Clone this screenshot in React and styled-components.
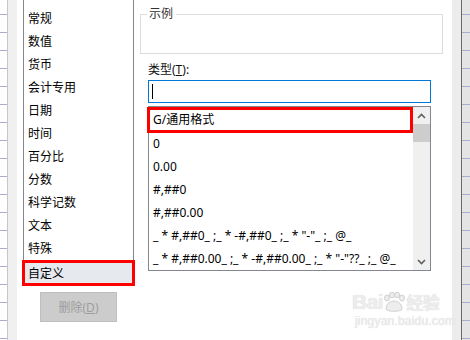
import React from "react";
import styled, { createGlobalStyle } from "styled-components";

const Global = createGlobalStyle`
  html, body { margin: 0; padding: 0; background: #fff; }
  body { width: 470px; height: 340px; overflow: hidden; }
  #root { width: 470px; height: 340px; }
`;

const Page = styled.div`
  position: relative;
  display: flex;
  width: 470px;
  height: 340px;
  overflow: hidden;
  font-family: "Noto Sans", "Noto Sans CJK SC", sans-serif;
  font-size: 12px;
  color: #000;
`;

const Sheet = styled.div`
  width: ${(p) => p.$w}px;
  flex: none;
  background-color: ${(p) => p.$bg};
  background-image: repeating-linear-gradient(
    to bottom,
    transparent 0px,
    transparent 14px,
    #a9aed0 14px,
    #a9aed0 15px,
    transparent 15px,
    transparent 18px
  );
`;

const Edge = styled.div`
  width: ${(p) => p.$w}px;
  flex: none;
  background: ${(p) => p.$bg};
  border-left: ${(p) => (p.$line ? `1px solid ${p.$line}` : "none")};
  border-right: ${(p) => (p.$rline ? `1px solid ${p.$rline}` : "none")};
  box-sizing: border-box;
`;

const Dialog = styled.div`
  flex: 1;
  background: #fff;
  display: flex;
  gap: 6px;
  padding-left: 6px;
  align-items: flex-start;
`;

const LeftCol = styled.div`
  width: 111px;
  display: flex;
  flex-direction: column;
  align-items: center;
`;

const CatList = styled.div`
  width: 111px;
  box-sizing: border-box;
  margin-top: -10px;
  padding-top: 16px;
  border: 1px solid #828790;
  display: flex;
  flex-direction: column;
`;

const CatItem = styled.div`
  height: 23px;
  line-height: 23px;
  padding-left: 4px;
  white-space: nowrap;
  ${(p) =>
    p.$selected &&
    `
    margin: 0 -2px -1px;
    height: 26px;
    line-height: 22px;
    padding-left: 3px;
    border: 3px solid #f00;
    box-sizing: border-box;
    background: #e6e9ee;
  `}
`;

const DelButton = styled.div`
  margin-top: 6px;
  width: 77px;
  height: 30px;
  box-sizing: border-box;
  background: #cccccc;
  border: 1px solid #bfbfbf;
  color: #9d9d9d;
  display: flex;
  align-items: center;
  justify-content: center;
  font-size: 12px;
`;

const U = styled.span`
  text-decoration: underline;
`;

const RightCol = styled.div`
  width: 303px;
  display: flex;
  flex-direction: column;
  padding-top: 14px;
`;

const Group = styled.fieldset`
  margin: 0;
  height: 47px;
  box-sizing: border-box;
  border: 1px solid #dcdcdc;
  padding: 0;
  margin-top: -7px;
  legend {
    margin-left: 6px;
    padding: 0 3px 0 2px;
    color: #333;
    line-height: 14px;
    font-size: 12px;
  }
`;

const Label = styled.div`
  margin-left: 8px;
  margin-top: 9px;
  line-height: 14px;
  color: #111;
`;

const Input = styled.div`
  margin-left: 8px;
  margin-top: 3px;
  width: 283px;
  height: 23px;
  box-sizing: border-box;
  border: 1px solid #0078d7;
  display: flex;
  align-items: center;
  padding-left: 3px;
`;

const Caret = styled.div`
  width: 1px;
  height: 15px;
  background: #000;
`;

const TypeBox = styled.div`
  margin-left: 8px;
  margin-top: 3px;
  width: 283px;
  height: 165px;
  box-sizing: border-box;
  border: 1px solid #828790;
  display: flex;
`;

const TypeItems = styled.div`
  flex: 1;
  min-width: 0;
  display: flex;
  flex-direction: column;
  padding-top: 1px;
`;

const TypeItem = styled.div`
  height: 23px;
  line-height: 23px;
  padding-left: 4px;
  white-space: nowrap;
  overflow: hidden;
  ${(p) =>
    p.$selected &&
    `
    margin: 0 0 -1px -2px;
    height: 26px;
    line-height: 20px;
    padding-left: 3px;
    border: 3px solid #f00;
    box-sizing: border-box;
    margin-top: -1px;
  `}
`;

const ScrollBar = styled.div`
  width: 17px;
  flex: none;
  background: #f0f0f0;
  display: flex;
  flex-direction: column;
  align-items: stretch;
`;

const Arrow = styled.div`
  height: 17px;
  display: flex;
  align-items: center;
  justify-content: center;
`;

const Thumb = styled.div`
  height: 18px;
  background: #cdcdcd;
`;

const Track = styled.div`
  flex: 1;
`;

const Watermark = styled.div`
  position: absolute;
  left: 352px;
  top: 291px;
  color: #ededed;
  font-family: "Liberation Sans", Arial, sans-serif;
  text-shadow: 0 0 1px #d0d0d0;
  pointer-events: none;
`;

const WMTop = styled.div`
  display: flex;
  align-items: center;
  font-size: 21px;
  font-weight: bold;
  line-height: 22px;
  letter-spacing: -0.5px;
`;

const WMCjk = styled.span`
  font-family: "Noto Sans CJK SC", sans-serif;
  font-size: 17px;
  margin-left: 1px;
`;

const WMBottom = styled.div`
  font-size: 12px;
  line-height: 14px;
  margin-top: 1px;
  margin-left: 3px;
  letter-spacing: 0.2px;
`;

const cats = [
  "常规",
  "数值",
  "货币",
  "会计专用",
  "日期",
  "时间",
  "百分比",
  "分数",
  "科学记数",
  "文本",
  "特殊",
  "自定义",
];

const types = [
  "G/通用格式",
  "0",
  "0.00",
  "#,##0",
  "#,##0.00",
  '_ * #,##0_ ;_ * -#,##0_ ;_ * "-"_ ;_ @_',
  '_ * #,##0.00_ ;_ * -#,##0.00_ ;_ * "-"??_ ;_ @_',
];

export default function App() {
  return (
    <>
      <Global />
      <Page>
        <Sheet $w={7} $bg="#ffffff" />
        <Edge $w={10} $bg="#f0f0f0" $line="#c8c8c8" />
        <Dialog>
          <LeftCol>
            <CatList>
              {cats.map((c, i) => (
                <CatItem key={c} $selected={i === cats.length - 1}>
                  {c}
                </CatItem>
              ))}
            </CatList>
            <DelButton>
              删除(<U>D</U>)
            </DelButton>
          </LeftCol>
          <RightCol>
            <Group>
              <legend>示例</legend>
            </Group>
            <Label>
              类型(<U>T</U>):
            </Label>
            <Input>
              <Caret />
            </Input>
            <TypeBox>
              <TypeItems>
                {types.map((t, i) => (
                  <TypeItem key={t} $selected={i === 0}>
                    {t}
                  </TypeItem>
                ))}
              </TypeItems>
              <ScrollBar>
                <Arrow>
                  <svg width="9" height="6" viewBox="0 0 9 6">
                    <path d="M1 5 L4.5 1.5 L8 5" fill="none" stroke="#606060" strokeWidth="1.6" />
                  </svg>
                </Arrow>
                <Thumb />
                <Track />
                <Arrow>
                  <svg width="9" height="6" viewBox="0 0 9 6">
                    <path d="M1 1 L4.5 4.5 L8 1" fill="none" stroke="#606060" strokeWidth="1.6" />
                  </svg>
                </Arrow>
              </ScrollBar>
            </TypeBox>
          </RightCol>
        </Dialog>
        <Edge $w={10} $bg="#ececec" $rline="#6b6b6b" />
        <Sheet $w={8} $bg="#e4e4e4" />
        <Watermark>
          <WMTop>
            Bai
            <svg width="22" height="20" viewBox="0 0 22 20">
              <ellipse cx="4" cy="6" rx="2.5" ry="3" fill="#ededed" stroke="#d0d0d0" />
              <ellipse cx="9" cy="3" rx="2.5" ry="2.8" fill="#ededed" stroke="#d0d0d0" />
              <ellipse cx="14" cy="3" rx="2.5" ry="2.8" fill="#ededed" stroke="#d0d0d0" />
              <ellipse cx="19" cy="6" rx="2.5" ry="3" fill="#ededed" stroke="#d0d0d0" />
              <path d="M3 17 C3 11 8 9 11 9 C14 9 19 11 19 17 C19 20 3 20 3 17 Z" fill="#ededed" stroke="#d0d0d0" />
            </svg>
            <WMCjk>经验</WMCjk>
          </WMTop>
          <WMBottom>jingyan.baidu.com</WMBottom>
        </Watermark>
      </Page>
    </>
  );
}
